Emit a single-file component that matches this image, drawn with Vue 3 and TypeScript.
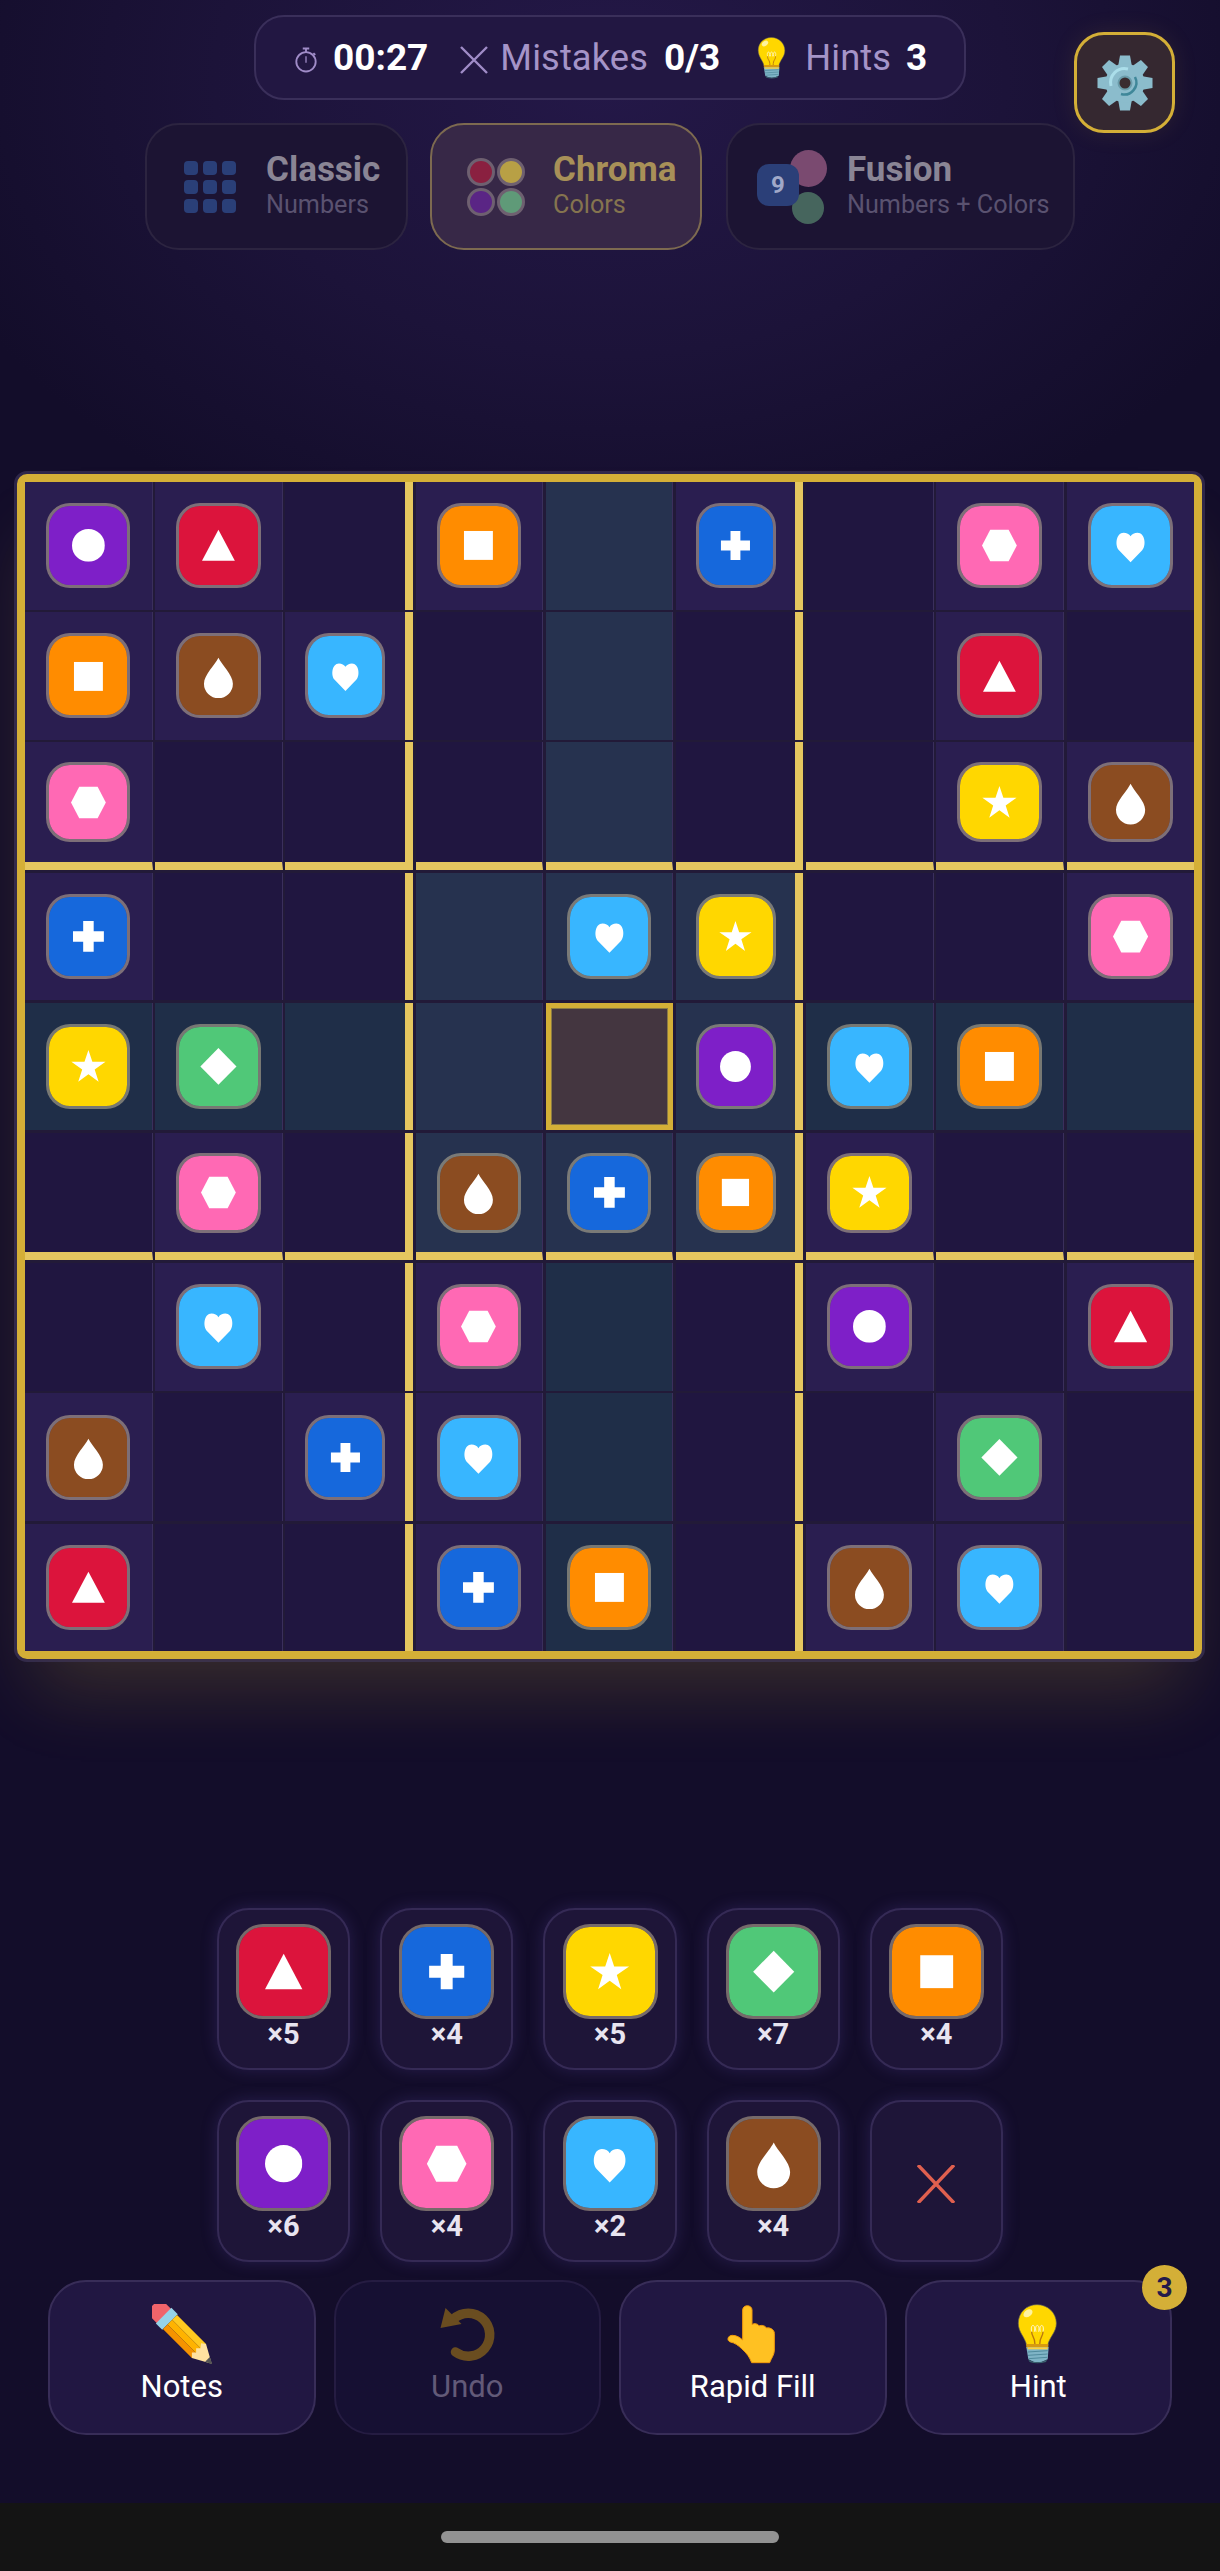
<script setup lang="ts">
type Color = 'purple' | 'red' | 'orange' | 'brown' | 'sky' | 'pink' | 'yellow' | 'blue' | 'green';

const rows: string[] = [
  'pr.o.b.hs',
  'ons....r.',
  'h......yn',
  'b...sy..h',
  'yg..*pso.',
  '.h.nboy..',
  '.s.h..p.r',
  'n.bs...g.',
  'r..bo.ns.',
];

const colorByKey: Record<string, Color> = {
  p: 'purple', r: 'red', o: 'orange', n: 'brown', s: 'sky', h: 'pink', y: 'yellow', b: 'blue', g: 'green',
};

const cells = rows.flatMap((row, r) =>
  row.split('').map((key, c) => ({
    id: `${r}-${c}`,
    color: colorByKey[key] as Color | undefined,
    cls: cellClass(r, c, key),
  })),
);

function cellClass(r: number, c: number, key: string): string[] {
  const out: string[] = [];
  if (key === '*') out.push('cell--selected');
  else if (r >= 3 && r <= 5 && c >= 3 && c <= 5) out.push('cell--box');
  else if (c === 4 && r < 3) out.push('cell--box');
  else if (r === 4 || c === 4) out.push('cell--line');
  else if (key !== '.') out.push('cell--given');
  if (c === 2 || c === 5) out.push('cell--gold-right');
  if (r === 2 || r === 5) out.push('cell--gold-bottom');
  if (c === 8) out.push('cell--last-col');
  return out;
}

const palette: { color: Color; left: number }[] = [
  { color: 'red', left: 5 },
  { color: 'blue', left: 4 },
  { color: 'yellow', left: 5 },
  { color: 'green', left: 7 },
  { color: 'orange', left: 4 },
  { color: 'purple', left: 6 },
  { color: 'pink', left: 4 },
  { color: 'sky', left: 2 },
  { color: 'brown', left: 4 },
];

const gearTeeth = [0, 45, 90, 135, 180, 225, 270, 315];
</script>

<template>
  <div class="screen">
    <svg class="defs">
      <symbol id="shape-purple" viewBox="0 0 100 100"><circle cx="50" cy="50" r="50" /></symbol>
      <symbol id="shape-red" viewBox="0 0 100 100" overflow="visible"><polygon points="50,2 100,97 0,97" /></symbol>
      <symbol id="shape-orange" viewBox="0 0 100 100"><rect x="6" y="6" width="88" height="88" /></symbol>
      <symbol id="shape-brown" viewBox="0 0 100 100" overflow="visible">
        <path d="M50 -7C60 15 94 45 94 72A44 44 0 0 1 6 72C6 45 40 15 50 -7Z" />
      </symbol>
      <symbol id="shape-sky" viewBox="0 0 100 100" overflow="visible">
        <path d="M50 100L15 64C2 50 6 11 29 11C38 11 46 15 50 22C54 15 62 11 71 11C94 11 98 50 85 64Z" />
      </symbol>
      <symbol id="shape-pink" viewBox="0 0 100 100" overflow="visible">
        <polygon points="22,2 78,2 103,50 78,98 22,98 -3,50" />
      </symbol>
      <symbol id="shape-yellow" viewBox="0 0 100 100" overflow="visible">
        <polygon points="50,0 62,36 102,36 69,59 81,97 50,74 19,97 31,59 -2,36 38,36" />
      </symbol>
      <symbol id="shape-blue" viewBox="0 0 100 100">
        <polygon points="34,3 66,3 66,34 97,34 97,66 66,66 66,97 34,97 34,66 3,66 3,34 34,34" />
      </symbol>
      <symbol id="shape-green" viewBox="0 0 100 100" overflow="visible">
        <polygon points="50,-6 105,50 50,106 -5,50" />
      </symbol>
      <symbol id="bulb" viewBox="865 12 180 180">
        <path d="M952 14C920 14 896 38 896 70C896 98 917 112 921 137H984C988 112 1010 98 1010 70C1010 38 984 14 952 14Z" fill="#ffd700" stroke="#6b6a55" stroke-width="2" />
        <ellipse cx="925" cy="40" rx="15" ry="10" transform="rotate(-35 925 40)" fill="#fff3a0" />
        <path d="M936 95C930 70 950 70 944 95M949 95C943 70 963 70 957 95M962 95C956 70 976 70 970 95" fill="none" stroke="#fff7d0" stroke-width="3" />
        <path d="M936 95C936 112 946 108 946 134M970 95C970 112 960 108 960 134" fill="none" stroke="#b9770e" stroke-width="4" />
        <rect x="920" y="132" width="66" height="12" fill="#d79a10" />
        <path d="M920 142H987L984 178Q953 196 926 178Z" fill="#7fb4c6" />
        <rect x="924" y="142" width="60" height="6" fill="#ffd23f" />
        <path d="M924 156L984 152M925 166L984 162M927 176L982 172" stroke="#4f8a9c" stroke-width="3" />
        <path d="M926 179Q953 194 982 179L979 186Q953 194 930 186Z" fill="#3b6470" />
      </symbol>
    </svg>

    <div class="stats">
      <svg class="stats__watch" viewBox="0 0 26 28" fill="none" stroke="#a08cc8">
        <circle cx="13" cy="16" r="10.5" stroke-width="2" />
        <path d="M9.5 1.5h7M13 1.5v4M21 6.5l2 2" stroke-width="2" />
        <path d="M13 10v7" stroke-width="1.4" />
      </svg>
      <span class="stats__value">00:27</span>
      <svg class="stats__x" viewBox="0 0 28 28" stroke="#a08cc8" stroke-width="2.4"><path d="M1 1L27 27M27 1L1 27" /></svg>
      <span class="stats__label">Mistakes</span>
      <span class="stats__value stats__value--mistakes">0/3</span>
      <svg class="stats__bulb"><use href="#bulb" /></svg>
      <span class="stats__label">Hints</span>
      <span class="stats__value stats__value--hints">3</span>
    </div>

    <button class="gear">
      <svg class="gear__icon" viewBox="-30 -30 60 60">
        <polygon v-for="deg in gearTeeth" :key="deg" points="-7,-16 -5,-27.5 5,-27.5 7,-16" fill="#8bbccc" :transform="`rotate(${deg})`" />
        <circle r="19.5" fill="#8bbccc" />
        <path d="M-14 3A14 14 0 0 1 3 -14" fill="none" stroke="#abdeea" stroke-width="3" />
        <path d="M10 -6A12 12 0 0 1 -4 11" fill="none" stroke="#3f8799" stroke-width="2.5" />
        <circle r="6.5" fill="#3a2c30" stroke="#6b9dab" stroke-width="2" />
      </svg>
    </button>

    <div class="modes">
      <div class="mode mode--classic">
        <div class="mode__grid"><i v-for="n in 9" :key="n"></i></div>
        <div class="mode__text">
          <div class="mode__title">Classic</div>
          <div class="mode__sub">Numbers</div>
        </div>
      </div>
      <div class="mode mode--chroma">
        <div class="mode__dots">
          <i class="dot--red"></i>
          <i class="dot--gold"></i>
          <i class="dot--purple"></i>
          <i class="dot--green"></i>
        </div>
        <div class="mode__text">
          <div class="mode__title">Chroma</div>
          <div class="mode__sub">Colors</div>
        </div>
      </div>
      <div class="mode mode--fusion">
        <div class="mode__fusion">
          <i class="fusion__pink"></i>
          <i class="fusion__green"></i>
          <b class="fusion__nine">9</b>
        </div>
        <div class="mode__text">
          <div class="mode__title">Fusion</div>
          <div class="mode__sub">Numbers + Colors</div>
        </div>
      </div>
    </div>

    <div class="board">
      <div v-for="cell in cells" :key="cell.id" class="cell" :class="cell.cls">
        <div v-if="cell.color" class="token" :class="`token--${cell.color}`">
          <svg class="token__shape"><use :href="`#shape-${cell.color}`" /></svg>
        </div>
      </div>
    </div>

    <div class="palette">
      <button v-for="item in palette" :key="item.color" class="pick">
        <div class="token pick__token" :class="`token--${item.color}`">
          <svg class="token__shape"><use :href="`#shape-${item.color}`" /></svg>
        </div>
        <span class="pick__count">×{{ item.left }}</span>
      </button>
      <button class="pick pick--clear">
        <svg class="pick__x" viewBox="0 0 38 38" stroke="#e0604f" stroke-width="3.4"><path d="M1 0L37 38M37 0L1 38" /></svg>
      </button>
    </div>

    <div class="actions">
      <button class="action">
        <svg class="action__icon" viewBox="0 0 60 60">
          <g transform="rotate(45 30 30)">
            <path d="M-4 20H5V40H-4Q-11 40 -11 33V27Q-11 20 -4 20Z" fill="#f0646a" />
            <rect x="4" y="19" width="9" height="22" fill="#95d3e8" />
            <rect x="13" y="20" width="41" height="7" fill="#ffc91f" />
            <rect x="13" y="27" width="41" height="6.5" fill="#ffb300" />
            <rect x="13" y="33.5" width="41" height="6.5" fill="#f59300" />
            <polygon points="54,20 72,30 54,40 50,36 53,33 50,30 53,27 50,23" fill="#ffe2a0" />
            <polygon points="66,26.7 73,30 66,33.3" fill="#555" />
          </g>
        </svg>
        <span class="action__label">Notes</span>
      </button>
      <button class="action action--disabled">
        <svg class="action__icon" viewBox="-3.5 -3 60 60">
          <path d="M13 12A21.5 21.5 0 1 1 15 45" fill="none" stroke="#6a4d20" stroke-width="9.5" stroke-linecap="round" />
          <polygon points="5,1 0,21 21,17" fill="#6a4d20" />
        </svg>
        <span class="action__label">Undo</span>
      </button>
      <button class="action">
        <svg class="action__icon" viewBox="6 12 180 180">
          <path d="M65 30C65 13 93 13 93 30V74C100 68 112 72 114 78C122 74 133 77 136 84C146 82 160 88 160 100V150C160 165 152 172 146 188H92C86 172 78 160 62 146C52 136 40 128 28 126C16 122 20 106 34 106C46 106 56 112 65 120Z" fill="#ffc122" stroke="#f29a0c" stroke-width="3" />
        </svg>
        <span class="action__label">Rapid Fill</span>
      </button>
      <button class="action action--hint">
        <svg class="action__icon"><use href="#bulb" /></svg>
        <span class="action__label">Hint</span>
        <span class="action__badge">3</span>
      </button>
    </div>

    <div class="navbar"><div class="navbar__pill"></div></div>
  </div>
</template>

<style scoped>
.screen {
  position: relative;
  display: flex;
  flex-direction: column;
  align-items: center;
  width: 1220px;
  height: 2571px;
  overflow: hidden;
  font-family: Roboto, "Liberation Sans", sans-serif;
  background:
    radial-gradient(ellipse 720px 500px at 610px 80px, #241848 0%, #1c1339 55%, rgba(19, 13, 42, 0) 100%),
    #130d2a;
}

.defs {
  display: none;
}

.stats {
  display: flex;
  align-items: center;
  box-sizing: border-box;
  width: 712px;
  height: 85px;
  margin-top: 15px;
  padding-left: 38px;
  background: #221742;
  border: 2.5px solid #3a2f5a;
  border-radius: 30px;
}

.stats__watch {
  width: 24px;
  height: 26px;
  margin-right: 15px;
  margin-top: 4px;
}

.stats__x {
  width: 28px;
  height: 28px;
  margin: 4px 12px 0 32px;
}

.stats__bulb {
  width: 42px;
  height: 42px;
  margin: 0 12px 0 31px;
}

.stats__label {
  font-size: 36.3px;
  color: #a594c8;
  letter-spacing: 0.1px;
}

.stats__value {
  font-size: 37px;
  font-weight: 700;
  color: #fff;
}

.stats__value--mistakes {
  margin-left: 16px;
}

.stats__value--hints {
  margin-left: 15px;
}

.gear {
  position: absolute;
  top: 32px;
  left: 1074px;
  display: flex;
  align-items: center;
  justify-content: center;
  box-sizing: border-box;
  width: 101px;
  height: 101px;
  padding: 0;
  background: #352830;
  border: 3px solid #d4af37;
  border-radius: 30px;
  box-shadow: 0 0 24px rgba(212, 175, 55, 0.1);
}

.gear__icon {
  width: 60px;
  height: 60px;
}

.modes {
  display: flex;
  margin-top: 23px;
}

.mode {
  display: flex;
  align-items: center;
  box-sizing: border-box;
  height: 127px;
  background: #1c1433;
  border: 2.5px solid #2c2440;
  border-radius: 34px;
}

.mode--classic {
  width: 263px;
  padding-left: 37px;
  gap: 30px;
}

.mode--chroma {
  width: 272px;
  margin-left: 22px;
  padding-left: 35px;
  gap: 28px;
  background: #372847;
  border-color: #7d6a50;
}

.mode--fusion {
  width: 349px;
  margin-left: 24px;
  padding-left: 29px;
  gap: 20px;
}

.mode__text {
  margin-bottom: 3px;
}

.mode__title {
  font-size: 35px;
  line-height: 40px;
  font-weight: 700;
  color: #8a8595;
}

.mode__sub {
  font-size: 25.2px;
  line-height: 30px;
  color: #5a5270;
}

.mode--chroma .mode__title {
  color: #a89058;
}

.mode--chroma .mode__sub {
  color: #85744f;
}

.mode__grid {
  display: grid;
  grid-template-columns: repeat(3, 14px);
  grid-auto-rows: 14px;
  gap: 5px;
}

.mode__grid i {
  background: #2a3f78;
  border-radius: 4px;
}

.mode__dots {
  display: grid;
  grid-template-columns: repeat(2, 28px);
  grid-auto-rows: 28px;
  gap: 2px;
}

.mode__dots i {
  box-sizing: border-box;
  border: 3px solid #6e6070;
  border-radius: 50%;
}

.dot--red { background: #8a2040; }
.dot--gold { background: #b8a045; }
.dot--purple { background: #5a2585; }
.dot--green { background: #5f9a78; }

.mode__fusion {
  position: relative;
  width: 70px;
  height: 74px;
}

.fusion__pink,
.fusion__green,
.fusion__nine {
  position: absolute;
}

.fusion__pink {
  left: 33px;
  top: 0;
  width: 37px;
  height: 37px;
  border-radius: 50%;
  background: #7a4a70;
}

.fusion__green {
  left: 35px;
  top: 42px;
  width: 32px;
  height: 32px;
  border-radius: 50%;
  background: #46655d;
}

.fusion__nine {
  left: 0;
  top: 14px;
  width: 42px;
  height: 42px;
  border-radius: 12px;
  background: #2b3f78;
  color: #a0a8c8;
  font-size: 24px;
  line-height: 42px;
  text-align: center;
}

.board {
  display: grid;
  grid-template-columns: repeat(9, 1fr);
  gap: 2.67px;
  align-self: flex-start;
  box-sizing: border-box;
  width: 1185px;
  margin: 224px 0 0 17px;
  background: #221a38;
  border: 8px solid #d4af37;
  border-radius: 10px;
  box-shadow:
    0 0 0 3px rgba(70, 60, 100, 0.55),
    0 48px 70px -18px rgba(212, 175, 55, 0.2);
}

.cell {
  display: flex;
  align-items: center;
  justify-content: center;
  box-sizing: border-box;
  aspect-ratio: 1;
  background: #201640;
  border-right: 1.33px solid #3a2f5c;
}

.cell--given {
  background: #2a1e50;
}

.cell--box {
  background: #26324f;
}

.cell--line {
  background: #1f2e48;
}

.cell--selected {
  background: #443640;
  border: 5px solid #d4af37;
  box-shadow: inset 0 0 0 1px #8a7a45;
}

.cell--gold-right {
  border-right: 8px solid #e5c65f;
}

.cell--gold-bottom {
  border-bottom: 8px solid #e5c65f;
}

.cell--last-col {
  border-right: none;
}

.token {
  display: flex;
  align-items: center;
  justify-content: center;
  box-sizing: border-box;
  width: 66.6%;
  height: 66.6%;
  border: 3px solid rgba(226, 210, 169, 0.45);
  border-radius: 24px;
  background-clip: padding-box;
}

.token--purple { background-color: #7e1fc8; }
.token--red { background-color: #dc143c; }
.token--orange { background-color: #ff8c00; }
.token--brown { background-color: #8b4c21; }
.token--sky { background-color: #38b6ff; }
.token--pink { background-color: #ff69b4; }
.token--yellow { background-color: #ffd700; }
.token--blue { background-color: #1668dc; }
.token--green { background-color: #50c878; }

.token__shape {
  width: 42%;
  aspect-ratio: 1;
  fill: #fff;
  overflow: visible;
}

.palette {
  display: grid;
  grid-template-columns: repeat(5, 133.2px);
  gap: 30px;
  margin-top: 249px;
}

.pick {
  display: flex;
  flex-direction: column;
  align-items: center;
  box-sizing: border-box;
  height: 162px;
  padding: 14px 0 0;
  font-family: inherit;
  background: #1e1538;
  border: 2.5px solid #352a55;
  border-radius: 32px;
  box-shadow: 0 0 16px rgba(100, 80, 180, 0.25);
}

.pick__token {
  flex: none;
  width: 95px;
  height: 95px;
  border-radius: 27px;
}

.pick__count {
  margin-top: 1px;
  font-size: 29px;
  line-height: 28px;
  font-weight: 700;
  color: #e8e4f0;
}

.pick--clear {
  justify-content: center;
  padding: 6px 0 0;
}

.pick__x {
  width: 38px;
  height: 38px;
}

.actions {
  display: grid;
  grid-template-columns: repeat(4, 267.5px);
  gap: 18px;
  margin-top: 18px;
}

.action {
  position: relative;
  display: flex;
  flex-direction: column;
  align-items: center;
  box-sizing: border-box;
  height: 155px;
  padding: 22px 0 0;
  font-family: inherit;
  background: #211742;
  border: 2.5px solid #382d58;
  border-radius: 38px;
}

.action--disabled {
  background: #161033;
  border-color: #251c42;
}

.action__icon {
  width: 60px;
  height: 60px;
}

.action__label {
  margin-top: 5px;
  font-size: 31px;
  line-height: 36px;
  color: #fff;
}

.action--disabled .action__label {
  color: #625a78;
}

.action__badge {
  position: absolute;
  top: -17px;
  right: -17px;
  width: 45px;
  height: 45px;
  border-radius: 50%;
  background: #d4af37;
  color: #231a4a;
  font-size: 28px;
  line-height: 45px;
  font-weight: 700;
}

.navbar {
  display: flex;
  justify-content: center;
  box-sizing: border-box;
  width: 100%;
  height: 68px;
  margin-top: auto;
  padding-top: 28px;
  background: #141414;
}

.navbar__pill {
  width: 338px;
  height: 12px;
  border-radius: 6px;
  background: #929292;
}
</style>

<style>
html,
body {
  margin: 0;
  background: #130d2a;
}
</style>
